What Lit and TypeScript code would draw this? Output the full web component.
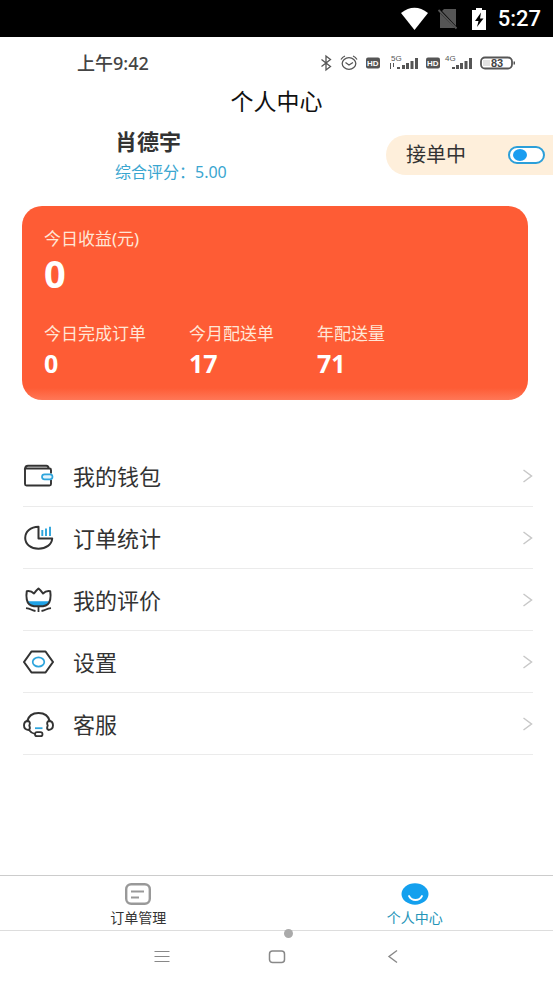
import { LitElement, html, css, svg } from "lit";
import { customElement, property, state } from "lit/decorators.js";
import { classMap } from "lit/directives/class-map.js";

const icons: Record<string, unknown> = {
  wallet: svg`
    <path d="M2 8.500V24q0 1.500 1.500 1.500H26.500q1.500 0 1.500-1.500V20M28 13.500V10q0-1.500-1.500-1.500H2Q2.500 5.800 5 5.800H23.500q1.500 0 2.500 2.700" fill="none" stroke="#333" stroke-width="1.900"/>
    <rect x="19" y="14.300" width="10.500" height="5" rx="2.500" fill="#e4f4fc" stroke="#2da4dc" stroke-width="1.700"/>`,
  chart: svg`
    <path d="M15.500 4.800C7.500 4.800 2.200 9.800 2.200 16s5.800 10.700 13.300 10.700S28.800 22.500 29.200 16.500H15.500z" fill="none" stroke="#333" stroke-width="2" stroke-linejoin="round"/>
    <path d="M19.300 8v6M23 6.500v7.500M27 4.800v9.200" stroke="#2da4dc" stroke-width="1.900"/>`,
  flower: svg`
    <path d="M4.500 17.300h22q-1.500 4.500-7 5h-8q-5.500-.5-7-5z" fill="#1fa2e6"/>
    <path d="M15.500 4.500Q13 6.500 11 9.500 8 6.500 3.800 7.200q-.8 4.300 0 8.300Q5 21.500 11 22.300h9q6-.8 7.200-6.800.8-4 0-8.300-4.200-.7-7.200 2.300-2-3-4.500-5z" fill="none" stroke="#333" stroke-width="2" stroke-linejoin="round"/>
    <path d="M15.500 22.500V28M3 24.200q3 .3 5 1.300t4.500 1.500M28 24.200q-3 .3-5 1.300t-4.500 1.500" fill="none" stroke="#333" stroke-width="1.800"/>`,
  settings: svg`
    <path d="M8.500 5.500h14L30 16l-7.500 10.500h-14L1 16z" fill="none" stroke="#333" stroke-width="2.100" stroke-linejoin="round"/>
    <ellipse cx="15.500" cy="16" rx="5.800" ry="4.600" fill="none" stroke="#2da4dc" stroke-width="1.700"/>`,
  service: svg`
    <path d="M4 13.500C5.500 8 10 5 15.500 5S25.500 8 27 13.500" fill="none" stroke="#333" stroke-width="2.100"/>
    <path d="M5.300 13Q1 13 1 17.300T5.500 22Q7.800 21 6.300 17.500 7.800 14 5.300 13zM25.700 13q4.300 0 4.300 4.300T25.500 22q-2.300-1-.8-4.500-1.500-3.500 1-4.500z" fill="none" stroke="#333" stroke-width="1.900" stroke-linejoin="round"/>
    <path d="M6 22q2 3 6 4" fill="none" stroke="#333" stroke-width="1.800"/>
    <rect x="12" y="24.200" width="7.500" height="4" rx="2" fill="#fff" stroke="#333" stroke-width="1.800"/>
    <path d="M12 20.200h7.500" stroke="#2da4dc" stroke-width="1.800"/>`,
};

@customElement("menu-row")
class MenuRow extends LitElement {
  @property() icon = "";
  @property() label = "";

  static styles = css`
    :host { display: block; }
    .row {
      box-sizing: border-box;
      display: flex;
      align-items: center;
      height: 62px;
      border-bottom: 1px solid #ebebeb;
      color: #333;
      font-size: 22px;
      line-height: 28px;
      text-decoration: none;
    }
    .icon { width: 32px; height: 32px; margin-right: 18px; }
    .label { flex: 1; }
    .chevron { width: 12px; height: 16px; }
  `;

  render() {
    return html`<a class="row" href="#${this.icon}">
      <svg class="icon" viewBox="0 0 32 32" aria-hidden="true">${icons[this.icon]}</svg>
      <span class="label">${this.label}</span>
      <svg class="chevron" viewBox="0 0 12 16" aria-hidden="true">
        <path d="M2.500 2l8 6-8 6" fill="none" stroke="#c8c8c8" stroke-width="1.500"/>
      </svg>
    </a>`;
  }
}

@customElement("app-root")
class AppRoot extends LitElement {
  @state() private tab = "me";
  @state() private accepting = true;

  private stats = [
    { label: "今日完成订单", value: "0" },
    { label: "今月配送单", value: "17" },
    { label: "年配送量", value: "71" },
  ];

  private rows = [
    { icon: "wallet", label: "我的钱包" },
    { icon: "chart", label: "订单统计" },
    { icon: "flower", label: "我的评价" },
    { icon: "settings", label: "设置" },
    { icon: "service", label: "客服" },
  ];

  static styles = css`
    :host {
      display: flex;
      flex-direction: column;
      min-height: 100vh;
      background: #fff;
      color: #333;
      font-family: "Noto Sans", "Noto Sans CJK SC", sans-serif;
    }
    button { padding: 0; border: 0; background: none; font: inherit; color: inherit; }
    svg { display: block; flex: none; }
    .system {
      display: flex;
      align-items: center;
      justify-content: flex-end;
      gap: 11px;
      height: 37px;
      padding-right: 12px;
      background: #000;
      color: #fff;
      font: 500 22px/26px Roboto, sans-serif;
    }
    .phone {
      display: flex;
      align-items: center;
      justify-content: space-between;
      height: 24px;
      padding: 14px 37px 0 77px;
      color: #444;
      font-size: 18px;
      font-weight: 500;
      line-height: 24px;
    }
    .title {
      margin: 11px 0 0;
      text-align: center;
      color: #111;
      font-size: 23px;
      font-weight: 400;
      line-height: 30px;
    }
    .profile {
      display: flex;
      justify-content: space-between;
      padding-left: 115px;
      margin-top: 10px;
    }
    .name { margin: 0; font-size: 22px; font-weight: 700; line-height: 30px; }
    .score { margin: 4px 0 0; color: #3aa6d0; font-size: 16px; line-height: 24px; }
    .accept {
      box-sizing: border-box;
      display: flex;
      align-items: center;
      justify-content: space-between;
      width: 167px;
      height: 40px;
      margin-top: 9px;
      padding: 0 8px 0 20px;
      border-radius: 20px 0 0 20px;
      background: #feefdb;
      font-size: 20px;
      line-height: 28px;
    }
    .switch {
      appearance: none;
      box-sizing: border-box;
      display: flex;
      align-items: center;
      width: 37px;
      height: 18px;
      margin: 0;
      padding: 0 3px;
      border: 2px solid #2c9fd9;
      border-radius: 9px;
      background: #fff;
    }
    .switch::before { content: ""; width: 14px; height: 12px; border-radius: 50%; background: #1b9df0; }
    .switch:not(:checked)::before { margin-left: auto; background: #999; }
    .card {
      margin: 22px 25px 0 22px;
      padding: 21px 22px 20px;
      border-radius: 20px;
      background: linear-gradient(to top, #ff7757, #fe5c35 12px);
      color: #fff;
    }
    .label { margin: 0; color: #ffe6d6; font-size: 17px; line-height: 24px; }
    .income { margin: 0; font-size: 38px; font-weight: 700; line-height: 44px; }
    .stats { display: flex; gap: 43px; margin: 27px 0 0; }
    .value { margin: 0; font-size: 25px; font-weight: 700; line-height: 34px; }
    .menu { margin: 45px 20px 0 23px; }
    .tabs {
      display: grid;
      grid-template-columns: 1fr 1fr;
      height: 54px;
      margin-top: auto;
      border-top: 1px solid #ccc;
      border-bottom: 1px solid #ddd;
    }
    .tab {
      display: flex;
      flex-direction: column;
      align-items: center;
      gap: 2px;
      padding-top: 6px;
      font-size: 14px;
      line-height: 20px;
    }
    .tab.active { color: #2494b8; }
    .nav {
      position: relative;
      display: flex;
      align-items: center;
      justify-content: center;
      gap: 91px;
      height: 52px;
    }
    .dot {
      position: absolute;
      top: -2px;
      left: calc(50% + 7px);
      width: 9px;
      height: 9px;
      border-radius: 50%;
      background: #aaa;
    }
  `;

  render() {
    return html`
      <div class="system">
        <svg width="86" height="26" viewBox="0 0 86 26" aria-hidden="true">
          <path d="M0 7Q13.500-3.500 27 7L13.500 24z" fill="#fff"/>
          <path d="M43 3h12v17L41 5zM39 7l15 15H39z" fill="#555"/>
          <path d="M37.500 4l18 18.500" stroke="#555" stroke-width="1.800"/>
          <path d="M71 4h4V2h6v2h4v20H71z" fill="#fff"/>
          <path d="M80 6.500l-6 8.500h3.500L76 21l6.500-8.500H79z" fill="#000"/>
        </svg>
        <span>5:27</span>
      </div>
      <div class="phone">
        <span>上午9:42</span>
        <svg width="196" height="18" viewBox="0 0 196 18" aria-hidden="true">
          <g fill="none" stroke="#555" stroke-width="1.300">
            <path d="M1.500 5.500l9 7-4.500 3.500V2l4.500 3.500-9 7"/>
            <ellipse cx="29" cy="9.500" rx="6.800" ry="5.800"/>
            <path d="M25.500 8.500l3.500 2.500 4-2.500M21 5.500q1.500-2.500 4-3.500M37 5.500Q35.500 3 33 2"/>
            <rect x="161" y="3.500" width="31" height="11" rx="4" stroke-width="1.800"/>
          </g>
          <g fill="#555">
            <rect x="46" y="3.500" width="14" height="11" rx="2"/>
            <rect x="106" y="3.500" width="14" height="11" rx="2"/>
            <path d="M70 9h1v6h-1zM73 9h1v4h-1zM77 13h3v2h-3zM82 11h3v4h-3zM86 9h3v6h-3zM90.500 7h3v8h-3zM95 4h3v11h-3z"/>
            <path d="M132 13h3v2h-3zM136 11h3v4h-3zM140 9h3v6h-3zM144.500 7h3v8h-3zM149 4h3v11h-3z"/>
            <path d="M193.500 7.500h1.500v3h-1.500z"/>
          </g>
          <g fill="#fff" font-family="Liberation Sans" font-weight="700" font-size="8">
            <text x="47" y="12">HD</text><text x="107" y="12">HD</text>
          </g>
          <g fill="#555" font-family="Liberation Sans" font-size="8">
            <text x="71" y="7">5G</text><text x="125" y="7">4G</text>
          </g>
          <rect x="163" y="6" width="7" height="6" fill="#e2e2e2"/>
          <text x="171" y="13" fill="#444" font-family="Liberation Sans" font-weight="700" font-size="11">83</text>
        </svg>
      </div>

      <h1 class="title">个人中心</h1>

      <section class="profile">
        <div>
          <h2 class="name">肖德宇</h2>
          <p class="score">综合评分：5.00</p>
        </div>
        <label class="accept">
          接单中
          <input class="switch" type="checkbox" role="switch" .checked=${this.accepting}
            @change=${(e: Event) => (this.accepting = (e.target as HTMLInputElement).checked)} />
        </label>
      </section>

      <section class="card">
        <p class="label">今日收益(元)</p>
        <p class="income">0</p>
        <div class="stats">
          ${this.stats.map((s) => html`<div>
            <p class="label">${s.label}</p>
            <p class="value">${s.value}</p>
          </div>`)}
        </div>
      </section>

      <nav class="menu">
        ${this.rows.map((r) => html`<menu-row icon=${r.icon} label=${r.label}></menu-row>`)}
      </nav>

      <div class="tabs">
        <button class=${classMap({ tab: true, active: this.tab === "orders" })} @click=${() => (this.tab = "orders")}>
          <svg width="28" height="24" viewBox="0 0 28 24" aria-hidden="true">
            <rect x="2.200" y="2.200" width="23.600" height="19.600" rx="5" fill="none" stroke="#999" stroke-width="2.400"/>
            <path d="M7 9.500h13M7 15.500h8" stroke="#999" stroke-width="2"/>
          </svg>
          订单管理
        </button>
        <button class=${classMap({ tab: true, active: this.tab === "me" })} @click=${() => (this.tab = "me")}>
          <svg width="28" height="24" viewBox="0 0 28 24" aria-hidden="true">
            <ellipse cx="14" cy="12" rx="13.500" ry="10.700" fill="#14a0ee"/>
            <path d="M8 14q2 4 6.500 4t6.500-4" fill="none" stroke="#fff" stroke-width="1.800" stroke-linecap="round"/>
          </svg>
          个人中心
        </button>
      </div>

      <div class="nav">
        <span class="dot"></span>
        <button aria-label="最近任务">
          <svg width="24" height="20" viewBox="0 0 24 20"><path d="M4.500 4.500h15M4.500 9.500h15M4.500 14.500h15" stroke="#888" stroke-width="1.200"/></svg>
        </button>
        <button aria-label="主页">
          <svg width="24" height="20" viewBox="0 0 24 20"><rect x="4.500" y="4" width="15" height="11.500" rx="3" fill="none" stroke="#888" stroke-width="1.500"/></svg>
        </button>
        <button aria-label="返回">
          <svg width="24" height="20" viewBox="0 0 24 20"><path d="M17 3.500L9 9.500l8 6" fill="none" stroke="#888" stroke-width="1.400"/></svg>
        </button>
      </div>
    `;
  }
}
